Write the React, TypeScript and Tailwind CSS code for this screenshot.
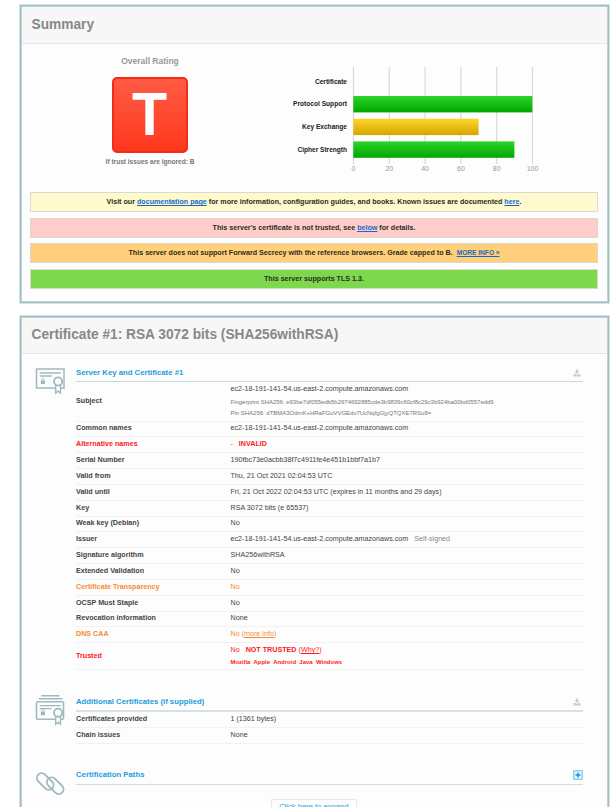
import React from "react";

type RowData = {
  label: string;
  value: React.ReactNode;
  tone?: "red" | "orange";
  height?: string;
};

const tones = {
  red: "text-[#ff1a1a]",
  orange: "text-[#f78a33]",
};

function Panel({ title, titleClass, className, children }: { title: string; titleClass: string; className: string; children: React.ReactNode }) {
  return (
    <section className={`border border-[#a0bfc3] bg-[#fdfdfd] shadow-[0_0_0_1px_#d3e2e4,inset_0_0_0_1px_#bdd3d6] ${className}`}>
      <h2 className={`mx-px mt-px flex items-center border-b border-[#dfe9e9] bg-[#f7f7f7] pl-[9.5px] text-[13.72px] font-bold whitespace-nowrap text-[#888] ${titleClass}`}>
        {title}
      </h2>
      {children}
    </section>
  );
}

function Chart() {
  const bars = [
    { label: "Certificate", value: 0, y: 73.5, fill: "", len: 32 },
    { label: "Protocol Support", value: 100, y: 96, fill: "url(#green)", len: 54 },
    { label: "Key Exchange", value: 70, y: 118.7, fill: "url(#gold)", len: 45 },
    { label: "Cipher Strength", value: 90, y: 141.4, fill: "url(#green)", len: 49.5 },
  ];
  return (
    <svg width="260" height="120" viewBox="285 60 260 120" className="block">
      <defs>
        <linearGradient id="green" x1="0" y1="0" x2="0" y2="1">
          <stop offset="0" stopColor="#2bd52b" />
          <stop offset="1" stopColor="#00a600" />
        </linearGradient>
        <linearGradient id="gold" x1="0" y1="0" x2="0" y2="1">
          <stop offset="0" stopColor="#ffd52b" />
          <stop offset="1" stopColor="#d3a600" />
        </linearGradient>
      </defs>
      {[0, 20, 40, 60, 80, 100].map((n) => (
        <g key={n}>
          <rect x={352.9 + n * 1.79} y="67" width="1.2" height="97" fill="#d9d9d9" />
          <text x={353.5 + n * 1.79} y="171.3" textAnchor="middle" fontSize="7" fill="#999">
            {n}
          </text>
        </g>
      ))}
      {bars.map((b) => (
        <g key={b.label}>
          {b.value > 0 && <rect x="353.3" y={b.y} width={b.value * 1.79} height="16.4" fill={b.fill} />}
          <text x="347" y={b.y + 10.3} textAnchor="end" textLength={b.len} fontSize="6.6" fontWeight="bold" fill="#222">
            {b.label}
          </text>
        </g>
      ))}
    </svg>
  );
}

function Notice({ className, children }: { className: string; children: React.ReactNode }) {
  return (
    <div className={`flex h-[20px] items-center justify-center border border-[#ddd8cc] pt-px text-[7.15px] font-bold whitespace-pre text-[#2c2c20] ${className}`}>
      <p>{children}</p>
    </div>
  );
}

function Link({ children }: { children: React.ReactNode }) {
  return <a className="text-[#1669c9] underline">{children}</a>;
}

function Ribbon() {
  return (
    <>
      <path d="M22.2 20v8l2.4-1.8L27 28v-8" fill="#fdfdfd" strokeWidth="1.4" />
      <circle cx="24.6" cy="16.5" r="4.1" fill="#fdfdfd" strokeWidth="1.9" />
      <rect x="7.3" y="15.4" width="4.2" height="3.6" fill="#9fb9bf" stroke="none" />
      <path d="M8.3 15.4v-1a1.1 1.1 0 0 1 2.2 0v1" strokeWidth=".8" />
    </>
  );
}

function CertIcon({ stacked = false }: { stacked?: boolean }) {
  return (
    <svg width="34" height="34" viewBox="-0.5 -1 34 34" fill="none" stroke="#9fb9bf" className="block">
      {stacked ? (
        <>
          <path d="M8 1.8h18M5.5 4.8h23.5" strokeWidth="1.5" />
          <rect x="3" y="7.8" width="27" height="17.4" rx="1" strokeWidth="1.6" />
          <path d="M6.2 11.7h21M6.2 14.6h12" strokeWidth="1.2" />
          <g transform="translate(0 2.2)">
            <Ribbon />
          </g>
        </>
      ) : (
        <>
          <rect x="3" y="3" width="27.5" height="19" strokeWidth="1.5" />
          <path d="M6.2 7h21M6.2 10h12" strokeWidth="1.3" />
          <g transform="translate(0 -1)">
            <Ribbon />
          </g>
        </>
      )}
    </svg>
  );
}

function ChainIcon() {
  return (
    <svg width="34" height="34" viewBox="0 0 34 34" fill="none" stroke="#9fb9bf" strokeWidth="1.9" className="block">
      <rect x="-9.75" y="-4.8" width="19.5" height="9.6" rx="4.8" transform="translate(12.2 12.5) rotate(45)" />
      <rect x="-9.75" y="-4.8" width="19.5" height="9.6" rx="4.8" transform="translate(22.2 16.7) rotate(45)" />
    </svg>
  );
}

function DownloadIcon() {
  return (
    <svg width="8" height="8" viewBox="0 0 8 8" className="mr-[2px] block" fill="#c3cfd1">
      <path d="M3 .5h2v2h1.5L4 5 1.5 2.5H3z" />
      <path d="M.5 5h2L4 6l1.5-1h2v2.5h-7z" />
    </svg>
  );
}

function PlusIcon() {
  return (
    <svg width="10" height="10" viewBox="0 0 10 10" className="block">
      <rect x=".8" y=".8" width="8.4" height="8.4" fill="#eef9fe" stroke="#5cbfec" />
      <path d="M5 2.5v5M2.5 5h5" stroke="#1499dc" strokeWidth="1.6" />
    </svg>
  );
}

function Row({ label, value, tone, height }: RowData) {
  return (
    <div className={`flex items-center border-b border-[#f1f3f3] ${height ?? "h-[15.84px]"} ${tone ? tones[tone] : "text-[#444]"}`}>
      <div className="w-[154.5px] shrink-0 font-bold">{label}</div>
      <div>{value}</div>
    </div>
  );
}

function Section({ icon, title, action, headClass, children }: { icon: React.ReactNode; title: string; action: React.ReactNode; headClass: string; children?: React.ReactNode }) {
  return (
    <div className="flex">
      <div className="w-[43px] shrink-0">{icon}</div>
      <div className="w-[506.5px] text-[7.17px] leading-none whitespace-pre">
        <div className={`flex items-center justify-between ${headClass}`}>
          <h3 className="text-[7.75px] font-bold text-[#1a9ddb]">{title}</h3>
          {action}
        </div>
        {children}
      </div>
    </div>
  );
}

const host = "ec2-18-191-141-54.us-east-2.compute.amazonaws.com";

const rows: RowData[] = [
  {
    label: "Subject",
    height: "h-[39.6px]",
    value: (
      <div className="flex flex-col gap-[5.4px]">
        <span>{host}</span>
        <span className="text-[5.98px] leading-[6px] text-[#777]">Fingerprint SHA256: e93be7df055edb5b2974692885cde3b9839c60cf8c29c3b924ba00bd0557edd9</span>
        <span className="text-[5.98px] leading-[6px] text-[#777]">Pin SHA256: dTBMA3OdmK+HRaFGuVVGEdv7UcNqfgGjyQTQXE7RSu8=</span>
      </div>
    ),
  },
  { label: "Common names", value: host },
  { label: "Alternative names", tone: "red", value: <>-   <b>INVALID</b></> },
  { label: "Serial Number", value: "190fbc73e0acbb38f7c4911fe4e451b1bbf7a1b7" },
  { label: "Valid from", value: "Thu, 21 Oct 2021 02:04:53 UTC" },
  { label: "Valid until", value: "Fri, 21 Oct 2022 02:04:53 UTC (expires in 11 months and 29 days)" },
  { label: "Key", value: "RSA 3072 bits (e 65537)" },
  { label: "Weak key (Debian)", value: "No" },
  { label: "Issuer", value: <>{host}   <span className="text-[#888]">Self-signed</span></> },
  { label: "Signature algorithm", value: "SHA256withRSA" },
  { label: "Extended Validation", value: "No" },
  { label: "Certificate Transparency", tone: "orange", value: "No" },
  { label: "OCSP Must Staple", value: "No" },
  { label: "Revocation information", value: "None" },
  { label: "DNS CAA", tone: "orange", value: <>No (<u>more info</u>)</> },
  {
    label: "Trusted",
    tone: "red",
    height: "h-[27px]",
    value: (
      <div className="flex flex-col gap-[4.5px]">
        <span>No   <b>NOT TRUSTED</b> (<u>Why?</u>)</span>
        <b className="text-[5.98px]">Mozilla  Apple  Android  Java  Windows</b>
      </div>
    ),
  },
];

export default function App() {
  return (
    <main className="h-[807px] w-[614px] overflow-hidden bg-white pt-[5px] pl-[20px] font-['Liberation_Sans',Arial,sans-serif]">
      <Panel title="Summary" titleClass="h-[37px] pt-px" className="h-[298px] w-[589px]">
        <div className="flex h-[148px]">
          <div className="flex w-[258px] flex-col items-center pt-[13px] leading-none">
            <h3 className="text-[8.5px] font-bold text-[#999]">Overall Rating</h3>
            <div className="mt-[11px] flex h-[76px] w-[76px] items-center justify-center rounded-[5px] border-2 border-[#ef3019] bg-linear-to-b from-[#ff5a43] to-[#ff361b] text-[61px] font-bold text-white">
              <span className="scale-x-[.94] leading-none">T</span>
            </div>
            <p className="mt-[6px] text-[6.55px] font-bold text-[#777]">If trust issues are ignored: B</p>
          </div>
          <div className="pt-[16px] pl-[6px]">
            <Chart />
          </div>
        </div>
        <div className="flex flex-col gap-[5.6px] pr-[10px] pl-[9px]">
          <Notice className="bg-[#fffacd]">Visit our <Link>documentation page</Link> for more information, configuration guides, and books. Known issues are documented <Link>here</Link>.</Notice>
          <Notice className="bg-[#ffcccc]">This server's certificate is not trusted, see <Link>below</Link> for details.</Notice>
          <Notice className="bg-[#ffcf79]">This server does not support Forward Secrecy with the reference browsers. Grade capped to B.  <span className="text-[6.6px]"><Link>MORE INFO »</Link></span></Notice>
          <Notice className="bg-[#7ed84d]">This server supports TLS 1.3.</Notice>
        </div>
      </Panel>

      <Panel title="Certificate #1: RSA 3072 bits (SHA256withRSA)" titleClass="h-[36px]" className="mt-[13px] h-[520px] w-[589px]">
        <div className="pt-[11px] pl-[12px]">
          <div className="h-[328px]">
            <Section icon={<CertIcon />} title="Server Key and Certificate #1" action={<DownloadIcon />} headClass="h-[17px] border-b border-[#c5d9da]">
              {rows.map((r) => (
                <Row key={r.label} {...r} />
              ))}
            </Section>
          </div>
          <div className="h-[76px]">
            <Section icon={<CertIcon stacked />} title="Additional Certificates (if supplied)" action={<DownloadIcon />} headClass="h-[19px] border-b-2 border-[#d6e2e2]">
              <Row label="Certificates provided" value="1 (1361 bytes)" />
              <Row label="Chain issues" value="None" />
            </Section>
          </div>
          <Section icon={<ChainIcon />} title="Certification Paths" action={<PlusIcon />} headClass="h-[16px] border-b border-[#cfdedf] pb-[4px]">
            <div className="flex justify-center pt-[14px] pr-[31px]">
              <button className="flex h-[16px] w-[86px] items-center justify-center border border-[#e3e8e8] text-[7.6px] leading-none text-[#1a9ddb]">Click here to expand</button>
            </div>
          </Section>
        </div>
      </Panel>
    </main>
  );
}
